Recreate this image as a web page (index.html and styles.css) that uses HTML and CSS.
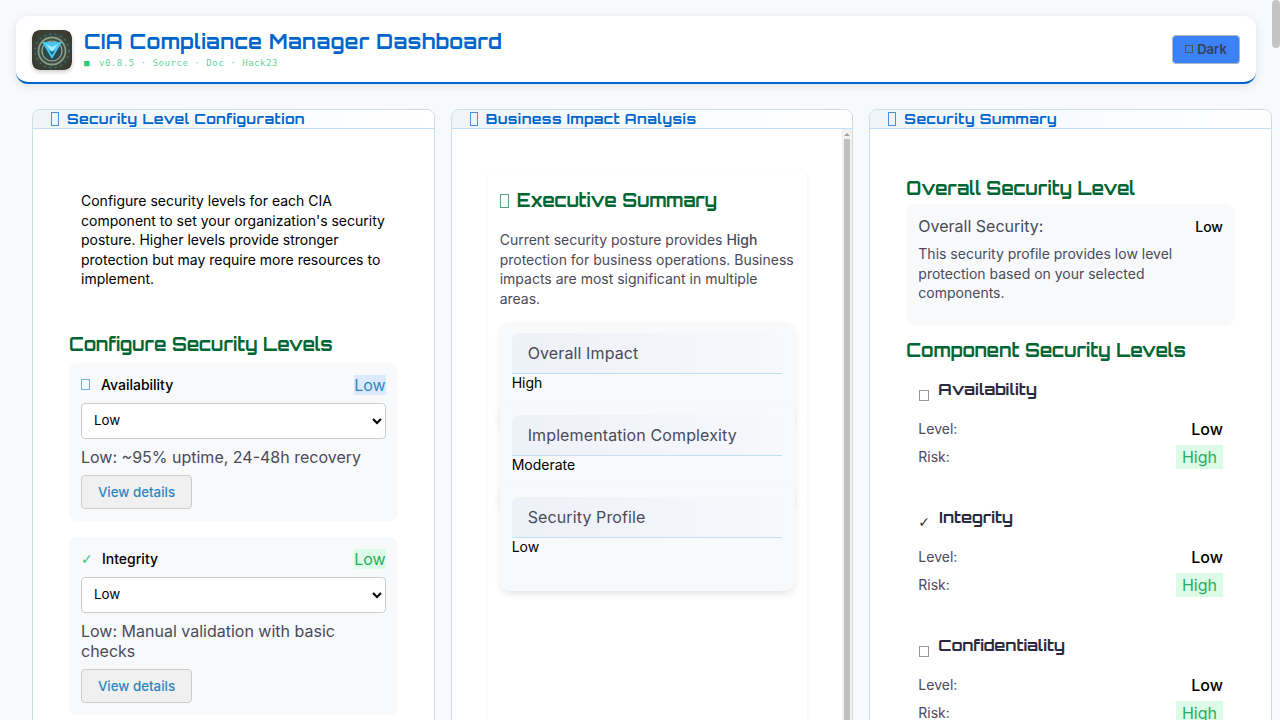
FILE: index.html
```html
<!DOCTYPE html>
<html lang="en">
<head>
    <meta charset="UTF-8">
    <meta name="viewport" content="width=device-width, initial-scale=1.0">
    <title>CIA Compliance Manager Dashboard</title>
    <link rel="stylesheet" href="styles.css">
</head>
<body>
    <div class="page-scrollbar"></div>

    <header class="app-header">
        <div class="brand">
            <svg class="logo" viewBox="0 0 40 40" role="img" aria-label="CIA Compliance Manager logo">
                <defs>
                    <radialGradient id="logo-bg" cx="50%" cy="50%" r="72%">
                        <stop offset="0" stop-color="#2b6d86"/>
                        <stop offset="0.5" stop-color="#39473f"/>
                        <stop offset="0.8" stop-color="#3c3a2e"/>
                        <stop offset="1" stop-color="#15191a"/>
                    </radialGradient>
                </defs>
                <rect width="40" height="40" rx="7" fill="url(#logo-bg)"/>
                <circle cx="20" cy="21" r="17" fill="none" stroke="#3fb4dc" stroke-width="1" stroke-dasharray="1.5 4" opacity="0.85"/>
                <circle cx="20" cy="21" r="13.5" fill="none" stroke="#8f9a7e" stroke-width="1.8"/>
                <circle cx="20" cy="21" r="10" fill="#2c4a4e" stroke="#a0a888" stroke-width="1.2"/>
                <path d="M10 12 L30 12 L20 29 Z" fill="#45c8f2"/>
                <path d="M14 14 L20 22 L26 14 L20 17 Z" fill="#a8ecff"/>
                <path d="M17 20 L20 25 L23 20 L20 22 Z" fill="#14506b"/>
            </svg>
            <div>
                <h1>CIA Compliance Manager Dashboard</h1>
                <p class="version"><span class="version-dot">■</span> v0.8.5 · Source · Doc · Hack23</p>
            </div>
        </div>
        <button class="theme-toggle" type="button"><span class="tofu tofu-toggle"></span>Dark</button>
    </header>

    <main class="dashboard">
        <section class="panel">
            <h2 class="panel-title"><span class="tofu tofu-panel"></span>Security Level Configuration</h2>
            <div class="config-body">
                <p class="intro">Configure security levels for each CIA component to set your organization's security posture. Higher levels provide stronger protection but may require more resources to implement.</p>
                <h3 class="section-title">Configure Security Levels</h3>

                <div class="level-card">
                    <div class="level-head">
                        <span class="level-name"><span class="tofu tofu-level"></span>Availability</span>
                        <span class="badge badge-blue">Low</span>
                    </div>
                    <select class="level-select"><option>Low</option><option>Moderate</option><option>High</option></select>
                    <p class="level-note">Low: ~95% uptime, 24-48h recovery</p>
                    <button class="details-btn" type="button">View details</button>
                </div>

                <div class="level-card">
                    <div class="level-head">
                        <span class="level-name"><span class="level-check">✓</span>Integrity</span>
                        <span class="badge badge-green">Low</span>
                    </div>
                    <select class="level-select"><option>Low</option><option>Moderate</option><option>High</option></select>
                    <p class="level-note">Low: Manual validation with basic checks</p>
                    <button class="details-btn" type="button">View details</button>
                </div>
            </div>
        </section>

        <section class="panel">
            <h2 class="panel-title"><span class="tofu tofu-panel"></span>Business Impact Analysis</h2>
            <div class="impact-body">
                <div class="summary-card">
                    <h3 class="summary-title"><span class="tofu tofu-summary"></span>Executive Summary</h3>
                    <p class="summary-text">Current security posture provides <strong>High</strong> protection for business operations. Business impacts are most significant in multiple areas.</p>
                    <div class="impact-list">
                        <div class="impact-item">
                            <div class="impact-label">Overall Impact</div>
                            <div class="impact-value">High</div>
                        </div>
                        <div class="impact-item">
                            <div class="impact-label">Implementation Complexity</div>
                            <div class="impact-value">Moderate</div>
                        </div>
                        <div class="impact-item">
                            <div class="impact-label">Security Profile</div>
                            <div class="impact-value">Low</div>
                        </div>
                    </div>
                </div>
            </div>
            <div class="panel-scrollbar"><div class="panel-scrollbar-thumb"></div></div>
        </section>

        <section class="panel">
            <h2 class="panel-title"><span class="tofu tofu-panel"></span>Security Summary</h2>
            <div class="summary-body">
                <h3 class="section-title">Overall Security Level</h3>
                <div class="overall-box">
                    <div class="overall-row">
                        <span class="overall-label">Overall Security:</span>
                        <span class="overall-value">Low</span>
                    </div>
                    <p class="overall-text">This security profile provides low level protection based on your selected components.</p>
                </div>
                <h3 class="section-title">Component Security Levels</h3>

                <div class="component">
                    <h4 class="component-name"><span class="tofu tofu-component"></span>Availability</h4>
                    <div class="component-row"><span>Level:</span><span class="component-level">Low</span></div>
                    <div class="component-row"><span>Risk:</span><span class="badge badge-risk">High</span></div>
                </div>
                <div class="component">
                    <h4 class="component-name"><span class="component-check">✓</span>Integrity</h4>
                    <div class="component-row"><span>Level:</span><span class="component-level">Low</span></div>
                    <div class="component-row"><span>Risk:</span><span class="badge badge-risk">High</span></div>
                </div>
                <div class="component">
                    <h4 class="component-name"><span class="tofu tofu-component"></span>Confidentiality</h4>
                    <div class="component-row"><span>Level:</span><span class="component-level">Low</span></div>
                    <div class="component-row"><span>Risk:</span><span class="badge badge-risk">High</span></div>
                </div>
            </div>
        </section>
    </main>
</body>
</html>
```
FILE: styles.css
```css
body {
    font-family: Inter, "Liberation Sans", sans-serif;
    margin: 0;
    padding: 16px 16px 0;
    color: #000;
    background-color: #f8f9fc;
}

h1, h2, h3, h4, p {
    margin: 0;
}

/* missing-glyph boxes used as icons */
.tofu {
    display: inline-block;
    flex: none;
    box-sizing: border-box;
    border: 1px solid currentColor;
}

.tofu-toggle {
    width: 8px;
    height: 8px;
    margin-right: 4px;
    color: #4b5563;
}

.tofu-panel {
    width: 8px;
    height: 14px;
    margin: 2px 8px 0 0;
    color: #4a90d9;
}

.tofu-level {
    width: 9px;
    height: 11px;
    margin-right: 11px;
    color: #6fb1dc;
}

.tofu-summary {
    width: 9px;
    height: 14px;
    margin: 2px 8px 0 0;
    color: #5a9c7c;
}

.tofu-component {
    width: 10px;
    height: 11px;
    margin: 12px 9px 0 1px;
    color: #999;
}

/* scrollbars are drawn, the page itself does not scroll */
.page-scrollbar {
    position: fixed;
    top: 0;
    right: 0;
    width: 8px;
    height: 48px;
    background-color: #c4c4c4;
    border-radius: 4px;
}

.panel-scrollbar {
    position: absolute;
    top: 19px;
    right: 0;
    bottom: 0;
    width: 10px;
    background-color: #f1f1f1;
}

.panel-scrollbar::before {
    content: "";
    position: absolute;
    top: 4px;
    left: 2px;
    border: 3px solid transparent;
    border-top: 0;
    border-bottom: 3px solid #a3a3a3;
}

.panel-scrollbar-thumb {
    margin: 10px 2px 0;
    height: 900px;
    background-color: #c0c0c0;
}

/* header */
.app-header {
    display: flex;
    align-items: center;
    justify-content: space-between;
    width: 1240px;
    height: 68px;
    box-sizing: border-box;
    padding: 2px 16px 0;
    background-color: #fff;
    border-bottom: 2px solid #0066cc;
    border-radius: 12px;
    box-shadow: 0 2px 8px rgba(0, 0, 0, 0.1);
}

.brand {
    display: flex;
    align-items: center;
    gap: 12px;
}

.logo {
    width: 40px;
    height: 40px;
    border-radius: 8px;
    box-shadow: 0 2px 4px rgba(0, 0, 0, 0.2);
}

.app-header h1 {
    font-family: Orbitron, "DejaVu Sans", sans-serif;
    font-size: 20px;
    font-weight: 700;
    line-height: 24px;
    letter-spacing: 0.5px;
    color: #0066cc;
}

.version {
    margin-top: 2px;
    font-family: "DejaVu Sans Mono", monospace;
    font-size: 9px;
    line-height: 14px;
    letter-spacing: 0.55px;
    color: #5fd695;
}

.version-dot {
    margin-right: 3px;
    color: #2ecc71;
}

.theme-toggle {
    display: flex;
    align-items: center;
    justify-content: center;
    width: 68px;
    height: 29px;
    margin-top: -2px;
    padding: 0;
    font-family: inherit;
    font-size: 13px;
    font-weight: 600;
    color: #374151;
    background-color: #3b82f6;
    border: 1px solid #b0b8c4;
    border-radius: 4px;
    cursor: pointer;
}

/* panels */
.dashboard {
    display: grid;
    grid-template-columns: repeat(3, 1fr);
    column-gap: 16px;
    width: 1240px;
    margin: 25px 0 0 16px;
}

.panel {
    position: relative;
    height: 900px;
    overflow: hidden;
    background-color: #fff;
    border: 1px solid #c9e0dc;
    border-radius: 8px;
}

.panel-title {
    display: flex;
    align-items: center;
    height: 16px;
    padding: 0 0 2px 18px;
    font-family: Orbitron, "DejaVu Sans", sans-serif;
    font-size: 14px;
    font-weight: 700;
    letter-spacing: 0.5px;
    color: #0066cc;
    background: linear-gradient(90deg, #eef4fa, #fafcff 60%, #fff);
    border-bottom: 1px solid #c0def5;
}

.section-title {
    font-family: Orbitron, "DejaVu Sans", sans-serif;
    font-size: 18px;
    font-weight: 700;
    line-height: 22px;
    color: #006633;
}

/* left column */
.config-body {
    padding: 62px 36px 0;
}

.intro {
    padding: 0 12px;
    font-size: 14px;
    line-height: 19.6px;
}

.config-body .section-title {
    margin-top: 44px;
    margin-bottom: 8px;
}

.level-card {
    margin-bottom: 16px;
    padding: 12px;
    background-color: #f8f9fb;
    border-radius: 8px;
}

.level-head {
    display: flex;
    align-items: center;
    justify-content: space-between;
    height: 20px;
    margin-bottom: 8px;
}

.level-name {
    display: flex;
    align-items: center;
    font-size: 14px;
    font-weight: 500;
}

.level-check {
    width: 21px;
    font-family: "DejaVu Sans", sans-serif;
    font-weight: 400;
    color: #2ecc71;
}

.badge {
    font-size: 16px;
    line-height: 20px;
}

.badge-blue {
    color: #2e86c1;
    background-color: #dbeafe;
}

.badge-green {
    color: #27ae60;
    background-color: #dcfce7;
}

.level-select {
    display: block;
    width: 100%;
    height: 36px;
    padding: 0 8px 2px;
    font-family: inherit;
    font-size: 13.33px;
    background-color: #fff;
    border: 1px solid #ccc;
    border-radius: 4px;
}

.level-note {
    margin: 8px 0;
    font-size: 16px;
    line-height: 20px;
    color: #4a4a5a;
}

.details-btn {
    display: block;
    width: 111px;
    height: 34px;
    padding: 0;
    font-family: inherit;
    font-size: 13.33px;
    font-weight: 500;
    color: #2e86c1;
    background-color: #f0f0f0;
    border: 1px solid #ccc;
    border-radius: 4px;
}

/* middle column */
.impact-body {
    padding: 40px 36px 0;
}

.summary-card {
    width: 319px;
    height: 1100px;
    box-sizing: border-box;
    padding: 17px 12px 0;
    background-color: #fff;
    border-radius: 8px;
    box-shadow: 0 1px 4px rgba(0, 0, 0, 0.06);
}

.summary-title {
    display: flex;
    align-items: center;
    font-family: Orbitron, "DejaVu Sans", sans-serif;
    font-size: 18px;
    font-weight: 700;
    line-height: 28px;
    color: #006633;
}

.summary-text {
    margin: 16px 0 14px;
    font-size: 14px;
    line-height: 19.6px;
    color: #4a4a5a;
}

.summary-text strong {
    font-weight: 500;
}

.impact-item {
    position: relative;
    height: 105px;
    box-sizing: border-box;
    margin-bottom: -23px;
    padding: 11px 13px 0 12px;
    background-color: #f8f9fb;
    border-radius: 10px;
    box-shadow: 0 4px 8px -2px rgba(0, 0, 0, 0.13);
}

.impact-label {
    height: 41px;
    box-sizing: border-box;
    padding-left: 16px;
    font-size: 16px;
    line-height: 40px;
    letter-spacing: 0.12px;
    color: #4a4a5a;
    background: linear-gradient(90deg, #edf1f8, #f6f8fb);
    border-bottom: 1px solid #c0def5;
    border-radius: 8px 8px 0 0;
}

.impact-value {
    font-size: 14px;
    line-height: 17px;
}

/* right column */
.summary-body {
    padding: 48px 36px 0;
}

.overall-box {
    height: 122px;
    box-sizing: border-box;
    margin: 5px 0 13px;
    padding: 12px;
    background-color: #f8f9fb;
    border-radius: 10px;
}

.overall-row {
    display: flex;
    align-items: center;
    justify-content: space-between;
    height: 20px;
    margin-bottom: 8px;
}

.overall-label {
    font-size: 16px;
    color: #4a4a5a;
}

.overall-value {
    font-size: 14px;
    font-weight: 500;
}

.overall-text {
    font-size: 14px;
    line-height: 19.6px;
    color: #4a4a5a;
}

.component {
    height: 128px;
    box-sizing: border-box;
    padding: 16px 12px 0;
}

.component-name {
    display: flex;
    align-items: center;
    height: 24px;
    margin-bottom: 13px;
    font-family: Orbitron, "DejaVu Sans", sans-serif;
    font-size: 16px;
    font-weight: 700;
    color: #2a2a3e;
}

.component-check {
    width: 21px;
    margin-top: 10px;
    font-family: "DejaVu Sans", sans-serif;
    font-size: 14px;
    font-weight: 400;
    color: #333;
}

.component-row {
    display: flex;
    align-items: center;
    justify-content: space-between;
    height: 28px;
    font-size: 14px;
    color: #4a4a5a;
}

.component-level {
    margin-top: 2px;
    font-size: 16px;
    font-weight: 500;
    color: #000;
}

.badge-risk {
    margin-top: 2px;
    padding: 2px 6px;
    color: #27ae60;
    background-color: #dcfce7;
}
```
